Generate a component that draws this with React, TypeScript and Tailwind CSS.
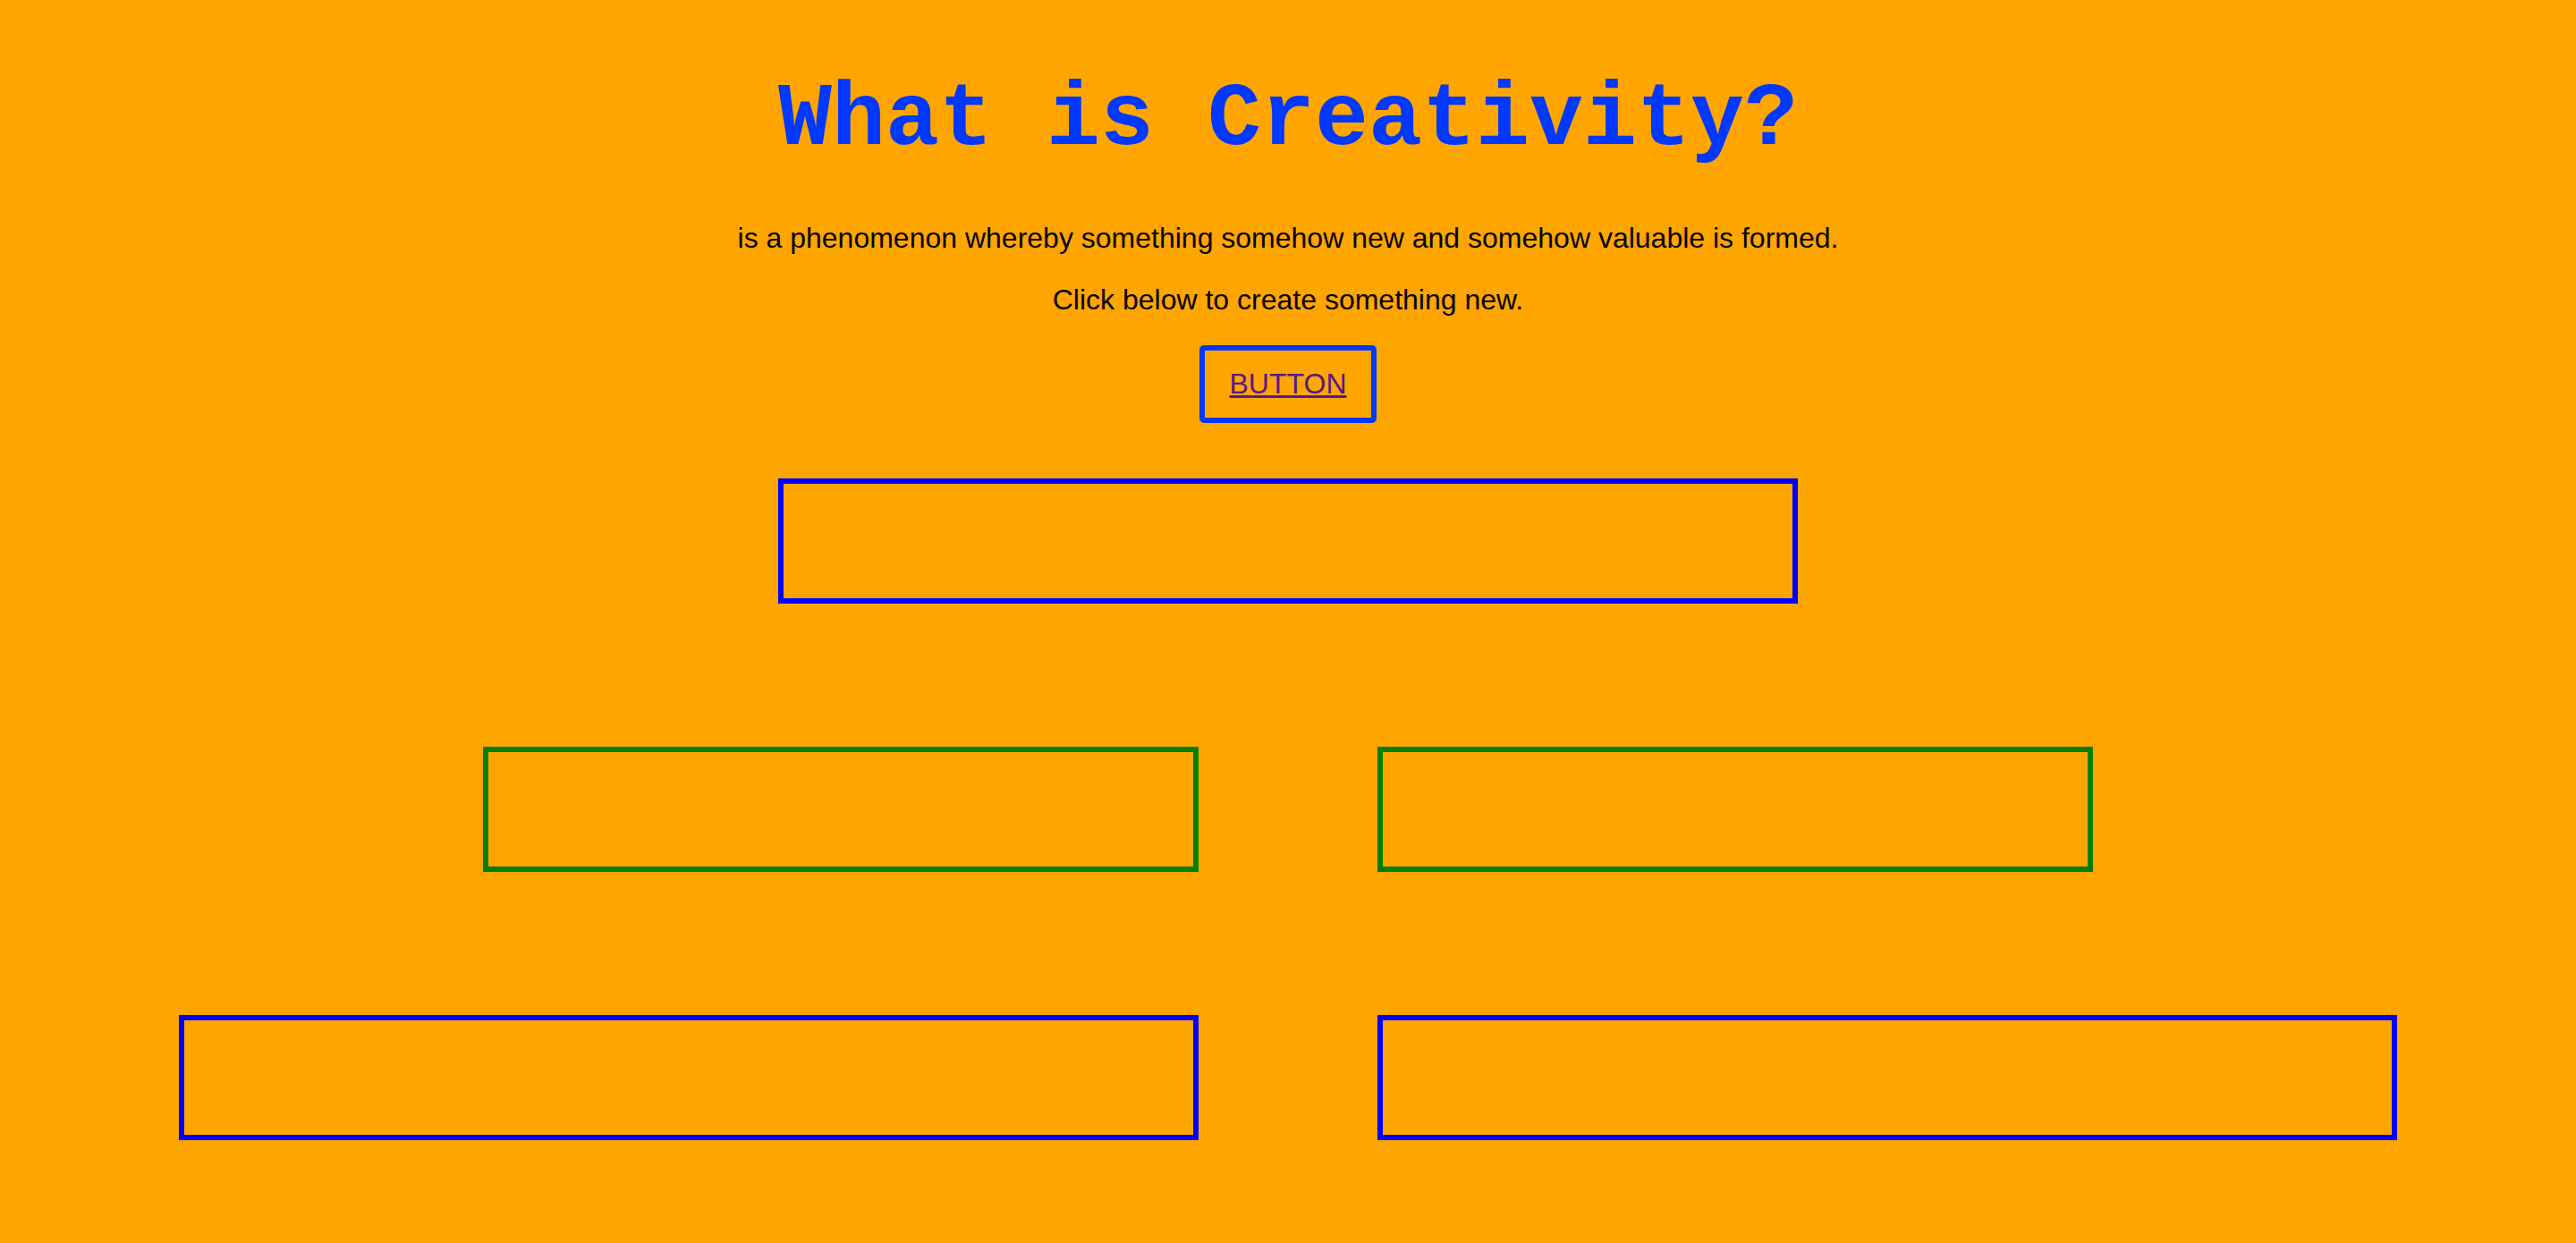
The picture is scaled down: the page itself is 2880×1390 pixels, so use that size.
export default function App() {
    return (
        <div className="flex min-h-screen flex-col items-center bg-[#ffa500] pb-[100px]">
            <h1 className="mt-[78px] font-['Liberation_Mono',monospace] text-[100px] font-bold leading-[113px] text-[#0038ff]">
                What is Creativity?
            </h1>
            <p className="mt-[57px] font-['Liberation_Sans',Arial,sans-serif] text-[32px] leading-[37px] text-black">
                is a phenomenon whereby something somehow new and somehow valuable is formed.
            </p>
            <p className="mt-[32px] font-['Liberation_Sans',Arial,sans-serif] text-[32px] leading-[37px] text-black">
                Click below to create something new.
            </p>
            <div className="mt-[32px] rounded-[5px] border-[6px] border-[#0038ff] px-[28px] py-[19px]">
                <a
                    href="#"
                    className="font-['Liberation_Sans',Arial,sans-serif] text-[32px] leading-[37px] text-[#551a8b] underline"
                >
                    BUTTON
                </a>
            </div>

            <div className="mt-[62px] h-[140px] w-[1140px] border-[6px] border-[#0000ff]"></div>

            <div className="mt-[160px] flex gap-[200px]">
                <div className="h-[140px] w-[800px] border-[6px] border-[#008000]"></div>
                <div className="h-[140px] w-[800px] border-[6px] border-[#008000]"></div>
            </div>

            <div className="mt-[160px] flex gap-[200px]">
                <div className="h-[140px] w-[1140px] border-[6px] border-[#0000ff]"></div>
                <div className="h-[140px] w-[1140px] border-[6px] border-[#0000ff]"></div>
            </div>
        </div>
    );
}
